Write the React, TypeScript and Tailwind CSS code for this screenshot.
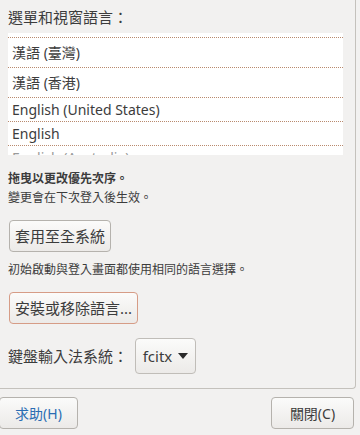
import React from "react";

const font = { fontFamily: '"Noto Sans", "Noto Sans CJK TC", sans-serif' };

function Row({ label, tall, last }: { label: string; tall?: boolean; last?: boolean }) {
  return (
    <div
      className={`flex items-center pl-[4px] border-t border-dotted border-[#b98a6e] ${
        tall ? "h-[30px]" : "h-[24px]"
      } ${last ? "text-[#9a9a9a]" : "text-[#3c3c3c]"}`}
    >
      {label}
    </div>
  );
}

export default function App() {
  return (
    <div
      className="w-[360px] h-[435px] bg-[#f2f1f0] overflow-hidden flex flex-col text-[#3c3c3c]"
      style={font}
    >
      <div className="w-[356px] h-[389px] shrink-0 border-r border-b border-[#c4c1bc] rounded-br-[4px] flex flex-col pl-[8px]">
        <div className="h-[33px] flex items-center text-[15px] pt-[1px]">選單和視窗語言：</div>
        <div className="w-[335px] h-[122px] bg-white overflow-hidden pt-[4px] text-[14px] leading-none">
          <Row label="漢語 (臺灣)" tall />
          <Row label="漢語 (香港)" tall />
          <Row label="English (United States)" />
          <Row label="English" />
          <Row label="English (Australia)" last />
        </div>
        <div className="mt-[15px] text-[12px] font-bold leading-[18px]">拖曳以更改優先次序。</div>
        <div className="text-[12px] leading-[20px]">變更會在下次登入後生效。</div>
        <button className="mt-[12px] w-[102px] h-[32px] ml-[1px] rounded-[4px] border border-[#b5b2ad] bg-gradient-to-b from-[#fbfbfa] to-[#eceae8] text-[15px] text-[#3c3c3c] flex items-center justify-center">
          套用至全系統
        </button>
        <div className="mt-[9px] text-[12px] leading-[18px]">初始啟動與登入畫面都使用相同的語言選擇。</div>
        <button className="mt-[13px] w-[129px] h-[32px] ml-[1px] rounded-[4px] border border-[#d69c86] bg-gradient-to-b from-[#fbfbfa] to-[#eceae8] text-[15px] text-[#3c3c3c] flex items-center justify-center">
          安裝或移除語言...
        </button>
        <div className="mt-[14px] flex items-center">
          <span className="text-[15px] w-[127px]">鍵盤輸入法系統：</span>
          <button className="w-[61px] h-[36px] rounded-[4px] border border-[#c0bdb8] bg-gradient-to-b from-[#fbfbfa] to-[#eceae8] text-[15px] text-[#3c3c3c] flex items-center justify-center gap-[6px]">
            fcitx
            <svg width="10" height="6" viewBox="0 0 10 6">
              <path d="M0 0 L10 0 L5 6 Z" fill="#2a2a2a" />
            </svg>
          </button>
        </div>
      </div>
      <div className="flex justify-between items-start pt-[8px] pr-[6px]">
        <button className="w-[79px] h-[32px] -ml-[1px] rounded-[4px] border border-[#b5b2ad] bg-gradient-to-b from-[#fbfbfa] to-[#eceae8] text-[14px] text-[#2a6db3] flex items-center justify-center">
          求助(H)
        </button>
        <button className="w-[83px] h-[32px] rounded-[4px] border border-[#b5b2ad] bg-gradient-to-b from-[#fbfbfa] to-[#eceae8] text-[14px] text-[#3c3c3c] flex items-center justify-center">
          關閉(C)
        </button>
      </div>
    </div>
  );
}
